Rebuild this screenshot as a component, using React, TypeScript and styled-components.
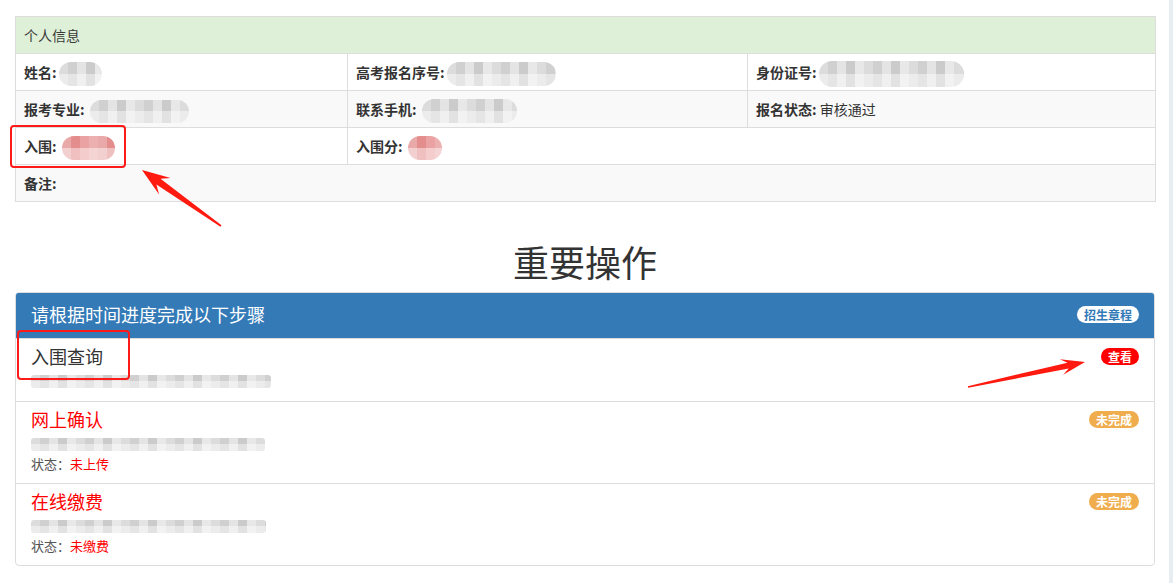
import React from 'react'
import styled, { createGlobalStyle } from 'styled-components'

const GlobalStyle = createGlobalStyle`
  html, body {
    margin: 0;
    padding: 0;
    background: #fff;
  }
  body {
    font-family: "Noto Sans CJK SC", "Noto Sans", "Liberation Sans", sans-serif;
    font-size: 14px;
    color: #333;
  }
`

const Page = styled.div`
  display: flex;
  width: 1173px;
  min-height: 583px;
`

const Main = styled.div`
  position: relative;
  width: 1169px;
  padding: 16px 14px 0 15px;
  box-sizing: border-box;
`

const Strip = styled.div`
  width: 4px;
  background: #e7eef2;
`

const InfoTable = styled.table`
  width: 1140px;
  border-collapse: collapse;
  table-layout: fixed;
  margin-bottom: 39px;
`

const Cell = styled.td<{ $bg?: string }>`
  border: 1px solid #ddd;
  padding: 8px;
  line-height: 20px;
  height: 20px;
  font-size: 14px;
  background: ${p => p.$bg || '#fff'};
  white-space: nowrap;
`

const HeadCell = styled(Cell)`
  color: #3a3a3a;
`

const Label = styled.b`
  font-weight: 700;
  color: #333;
`

const Redact = styled.span<{ $w: number; $h: number; $pink?: boolean }>`
  display: inline-block;
  vertical-align: middle;
  width: ${p => p.$w}px;
  height: ${p => p.$h}px;
  margin: -6px 0 -6px 2px;
  border-radius: ${p => p.$h / 2}px;
  background:
    linear-gradient(to bottom, rgba(255, 255, 255, 0) 50%, rgba(255, 255, 255, 0.45) 50%),
    ${p =>
      p.$pink
        ? 'repeating-linear-gradient(90deg, #eaa9a9 0 9px, #e48d8d 9px 18px, #eba2a2 18px 27px, #edb0b0 27px 36px)'
        : 'repeating-linear-gradient(90deg, #dcdcdc 0 9px, #d0d0d0 9px 18px, #e4e4e4 18px 27px, #cbcbcb 27px 36px, #e8e8e8 36px 45px)'};
  filter: blur(0.6px);
`

const LineRedact = styled(Redact)`
  display: block;
  margin: 0;
  border-radius: 3px;
`

const Heading = styled.h1`
  margin: 0 0 11px;
  text-align: center;
  font-size: 36px;
  line-height: 40px;
  font-weight: 400;
  color: #333;
`

const Panel = styled.div`
  width: 1140px;
  border: 1px solid #ddd;
  border-radius: 4px;
  box-sizing: border-box;
  overflow: hidden;
`

const PanelHeading = styled.div`
  display: flex;
  align-items: center;
  justify-content: space-between;
  background: #337ab7;
  color: #fff;
  padding: 9px 15px 11px;
  margin: -1px -1px 0;
  border: 1px solid #337ab7;
  border-radius: 4px 4px 0 0;
`

const PanelTitle = styled.div`
  font-size: 18px;
  line-height: 24px;
`

const Badge = styled.span<{ $bg: string; $fg?: string }>`
  display: inline-block;
  padding: 0 7px;
  height: 17px;
  line-height: 17px;
  border-radius: 9px;
  font-size: 12px;
  font-weight: 700;
  background: ${p => p.$bg};
  color: ${p => p.$fg || '#fff'};
`

const Item = styled.div`
  display: flex;
  justify-content: space-between;
  align-items: flex-start;
  padding: 7px 15px 10px;
  border-top: 1px solid #ddd;
  &:first-of-type {
    border-top: none;
  }
`

const ItemBody = styled.div`
  display: flex;
  flex-direction: column;
`

const ItemTitle = styled.div<{ $red?: boolean }>`
  font-size: 18px;
  line-height: 20px;
  margin-bottom: 5px;
  color: ${p => (p.$red ? '#ff0000' : '#333')};
`

const ItemText = styled.div`
  height: 20px;
  display: flex;
  align-items: center;
`

const Status = styled.div`
  font-size: 13px;
  line-height: 19px;
  color: #555;
`

const StatusValue = styled.span`
  color: #ff0000;
`

const ItemBadge = styled(Badge)`
  margin-top: 2px;
`

const Mark = styled.div<{ $x: number; $y: number; $w: number; $h: number }>`
  position: absolute;
  left: ${p => p.$x}px;
  top: ${p => p.$y}px;
  width: ${p => p.$w}px;
  height: ${p => p.$h}px;
  border: 2.5px solid #ff1a1a;
  border-radius: 4px;
  box-sizing: border-box;
  pointer-events: none;
`

const Overlay = styled.svg`
  position: absolute;
  left: 0;
  top: 0;
  pointer-events: none;
`

const arrow = (tx: number, ty: number, px: number, py: number, head: number, wing: number, shaft: number) => {
  const dx = px - tx
  const dy = py - ty
  const len = Math.hypot(dx, dy)
  const ux = dx / len
  const uy = dy / len
  const nx = -uy
  const ny = ux
  const jx = px - ux * head * 0.72
  const jy = py - uy * head * 0.72
  const wx = px - ux * head
  const wy = py - uy * head
  const pts = [
    [tx + nx * 0.8, ty + ny * 0.8],
    [jx + nx * shaft, jy + ny * shaft],
    [wx + nx * wing, wy + ny * wing],
    [px, py],
    [wx - nx * wing, wy - ny * wing],
    [jx - nx * shaft, jy - ny * shaft],
    [tx - nx * 0.8, ty - ny * 0.8],
  ]
  return pts.map(p => p.map(v => v.toFixed(1)).join(',')).join(' ')
}

const steps = [
  { title: '入围查询', red: false, badge: '查看', badgeBg: '#ff0000', w: 240 },
  { title: '网上确认', red: true, badge: '未完成', badgeBg: '#f0ad4e', w: 234, status: '未上传' },
  { title: '在线缴费', red: true, badge: '未完成', badgeBg: '#f0ad4e', w: 235, status: '未缴费' },
]

export default function App() {
  return (
    <Page>
      <GlobalStyle />
      <Main>
        <InfoTable>
          <colgroup>
            <col style={{ width: 332 }} />
            <col style={{ width: 400 }} />
            <col style={{ width: 408 }} />
          </colgroup>
          <tbody>
            <tr>
              <HeadCell colSpan={3} $bg="#dff0d8">个人信息</HeadCell>
            </tr>
            <tr>
              <Cell><Label>姓名:</Label><Redact $w={43} $h={24} /></Cell>
              <Cell><Label>高考报名序号:</Label><Redact $w={109} $h={24} /></Cell>
              <Cell><Label>身份证号:</Label><Redact $w={145} $h={26} /></Cell>
            </tr>
            <tr>
              <Cell $bg="#f9f9f9"><Label>报考专业:</Label> <Redact $w={99} $h={23} /></Cell>
              <Cell $bg="#f9f9f9"><Label>联系手机:</Label> <Redact $w={95} $h={24} /></Cell>
              <Cell $bg="#f9f9f9"><Label>报名状态:</Label> 审核通过</Cell>
            </tr>
            <tr>
              <Cell><Label>入围:</Label> <Redact $w={53} $h={24} $pink /></Cell>
              <Cell colSpan={2}><Label>入围分:</Label> <Redact $w={34} $h={24} $pink /></Cell>
            </tr>
            <tr>
              <Cell colSpan={3} $bg="#f9f9f9"><Label>备注:</Label></Cell>
            </tr>
          </tbody>
        </InfoTable>

        <Heading>重要操作</Heading>

        <Panel>
          <PanelHeading>
            <PanelTitle>请根据时间进度完成以下步骤</PanelTitle>
            <Badge $bg="#fff" $fg="#337ab7">招生章程</Badge>
          </PanelHeading>
          {steps.map(s => (
            <Item key={s.title}>
              <ItemBody>
                <ItemTitle $red={s.red}>{s.title}</ItemTitle>
                <ItemText>
                  <LineRedact $w={s.w} $h={13} />
                </ItemText>
                {s.status && (
                  <Status>
                    状态：<StatusValue>{s.status}</StatusValue>
                  </Status>
                )}
              </ItemBody>
              <ItemBadge $bg={s.badgeBg}>{s.badge}</ItemBadge>
            </Item>
          ))}
        </Panel>

        <Mark $x={10} $y={125} $w={116} $h={43} />
        <Mark $x={17} $y={330} $w={113} $h={50} />
        <Overlay width="1169" height="583">
          <polygon points={arrow(221, 226, 142, 170, 28, 10, 3.5)} fill="#ff1a0f" />
          <polygon points={arrow(968, 387, 1085, 362, 24, 8, 3)} fill="#ff1a0f" />
        </Overlay>
      </Main>
      <Strip />
    </Page>
  )
}
